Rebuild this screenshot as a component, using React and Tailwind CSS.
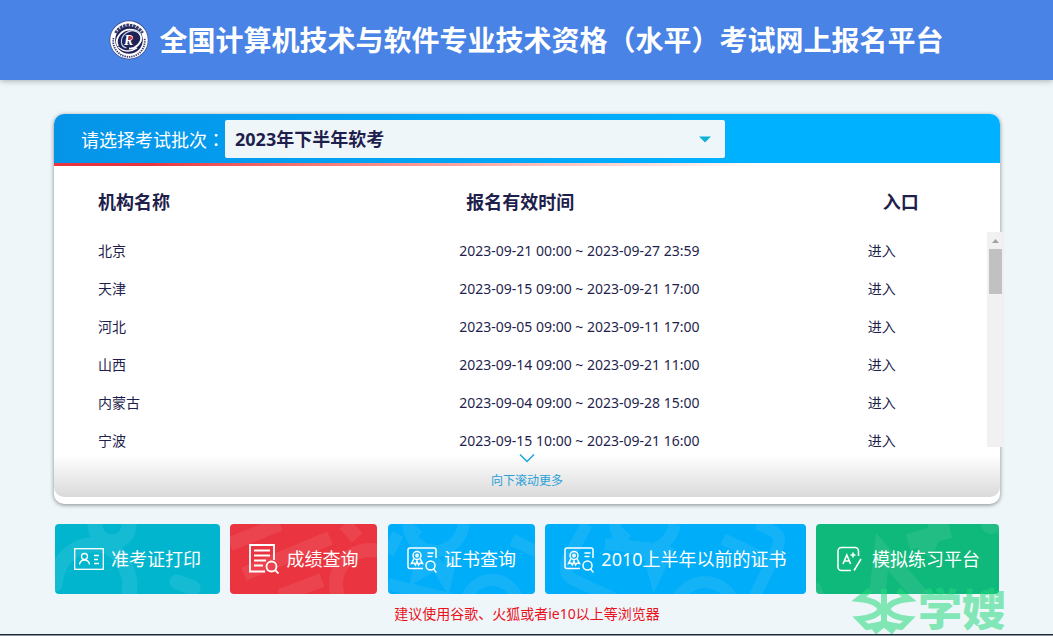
import React, { useState } from "react";

const batches = ["2023年下半年软考", "2023年上半年软考"];

const regions = [
  { name: "北京", time: "2023-09-21 00:00 ~ 2023-09-27 23:59" },
  { name: "天津", time: "2023-09-15 09:00 ~ 2023-09-21 17:00" },
  { name: "河北", time: "2023-09-05 09:00 ~ 2023-09-11 17:00" },
  { name: "山西", time: "2023-09-14 09:00 ~ 2023-09-21 11:00" },
  { name: "内蒙古", time: "2023-09-04 09:00 ~ 2023-09-28 15:00" },
  { name: "宁波", time: "2023-09-15 10:00 ~ 2023-09-21 16:00" },
];

function Logo() {
  return (
    <svg width="40" height="40" viewBox="0 0 40 40" aria-hidden="true">
      <circle cx="20" cy="20" r="19.5" fill="#3a4a86" />
      <circle cx="20" cy="20" r="18.8" fill="#fff" />
      <path d="M6.500 13a15.500 15.500 0 0 1 27 0" fill="none" stroke="#3b3f70" strokeWidth="3" strokeDasharray="2.6 0.8" />
      <path d="M4.500 18a15.800 15.800 0 1 0 31 0" fill="none" stroke="#3b3f70" strokeWidth="1.800" strokeDasharray="1.400 0.9" />
      <circle cx="20" cy="20" r="13.8" fill="#1e2257" />
      <path d="M9 26C5 18 13 8 24 10c8 1.500 11 9 5 15-2.500 2.500-6 4-9 3.500" fill="none" stroke="#fff" strokeWidth="1.800" />
      <path d="M31 13c-7-5-17-1-18.500 7-.6 4 1 7 5 8" fill="none" stroke="#c8cde8" strokeWidth="1.200" />
      <path d="M9 27c6 5 13 5 19 1" fill="none" stroke="#fff" strokeWidth="1.500" />
      <text x="15" y="25" fontSize="14" fontStyle="italic" fontWeight="700" fill="#fff" fontFamily="Liberation Serif, serif">R</text>
      <circle cx="21.500" cy="18" r="1.800" fill="#d8324c" />
    </svg>
  );
}

function CardIcon() {
  return (
    <svg width="30" height="30" viewBox="0 0 30 30" fill="none" stroke="#fff" strokeWidth="1.3">
      <rect x="0.700" y="4.700" width="28.600" height="20.600" />
      <circle cx="10.500" cy="12.500" r="3" />
      <path d="M5.500 20.500c.5-3 2-4.500 5-4.500s4.500 1.500 5 4.500M20 11.500h5M20 15.500h4M20 19.500h5" />
    </svg>
  );
}

function ScoreIcon() {
  return (
    <svg width="30" height="30" viewBox="0 0 30 30" fill="none" stroke="#fff" strokeWidth="1.8">
      <path d="M16 27.500H1V1h24v15M5 6.500h16M5 11.500h16M5 16.500h12M5 21.500h9" />
      <circle cx="22.500" cy="22.500" r="5" />
      <path d="M26 26l3.500 3.500" />
    </svg>
  );
}

function CertIcon() {
  return (
    <svg width="30" height="30" viewBox="0 0 30 30" fill="none" stroke="#fff" strokeWidth="1.5">
      <path d="M16 24.500H3a2 2 0 0 1-2-2V6a2 2 0 0 1 2-2h24a2 2 0 0 1 2 2v8" />
      <circle cx="10" cy="11.500" r="4" />
      <circle cx="10" cy="11.500" r="1.200" />
      <path d="M7 14.500l-2.500 5 2.500-.5 1.500 2 1.500-4 1.500 4 1.500-2 2.500.5-2.500-5M20.500 9h6M20.500 12.500h5" />
      <circle cx="23.500" cy="21.500" r="4.500" />
      <path d="M26.500 25l3 3.500" />
    </svg>
  );
}

function PracticeIcon() {
  return (
    <svg width="30" height="30" viewBox="0 0 30 30" fill="none" stroke="#fff" strokeWidth="1.6">
      <path d="M16 26.500H6.500a3.500 3.500 0 0 1-3.500-3.500V7a3.500 3.500 0 0 1 3.500-3.500H20a3.500 3.500 0 0 1 3.500 3.500v5" />
      <path d="M26 15l-7 11.500M8 20l3.800-9 3.800 9M9.500 17h5" />
      <path d="M18 8.500v5M15.500 11h5" />
    </svg>
  );
}

function PersonBg() {
  return (
    <g fill="none" strokeWidth="15" strokeLinecap="round">
      <circle cx="57" cy="1" r="17" />
      <path d="M0 60C4 15 55 10 68 38c8 14 8 24 5 38M122 58l16 6" />
    </g>
  );
}

function ScoreBg() {
  return (
    <g fill="none" strokeWidth="14">
      <path d="M0 20L50 0M14 50l86-36M50 72l42-16M115 0l12 14" />
      <circle cx="140" cy="60" r="34" />
    </g>
  );
}

function MedalBg() {
  return (
    <g fill="none" strokeWidth="12">
      <path d="M0 60l90 22M124 16l26 12M10 10L0 30" />
      <path d="M20 0c4 36 50 36 56 0" />
      <path d="M36 24l-6 26 18-10 10 16 6-28" />
      <path d="M22 8l5-5 5 5-5 5z" strokeWidth="3" />
      <circle cx="104" cy="82" r="26" />
    </g>
  );
}

function LongMedalBg() {
  return (
    <g fill="none" strokeWidth="12">
      <path d="M42 0L22 36c-4 12 0 18 12 22l50 24M178 15l42 20M212 0c24 8 26 14 18 30l-20 42" />
      <path d="M70 0c4 36 52 36 60 0" />
      <path d="M60 20l42 4 8 28 14-30" />
      <path d="M72 12l6-6 6 6-6 6z" strokeWidth="3" />
      <circle cx="160" cy="88" r="30" />
    </g>
  );
}

function GradeBg() {
  return (
    <g fill="none" strokeWidth="16">
      <path d="M60 80l6-52 46 52M92 18l42-12M122 0l-14 30" />
      <circle cx="175" cy="0" r="5" strokeWidth="10" />
      <path d="M0 60l6 12" strokeWidth="6" />
    </g>
  );
}

const links = [
  { label: "准考证打印", color: "bg-[#02b6cf]", Icon: CardIcon, Bg: PersonBg },
  { label: "成绩查询", color: "bg-[#ea353f]", Icon: ScoreIcon, Bg: ScoreBg },
  { label: "证书查询", color: "bg-[#00adf8]", Icon: CertIcon, Bg: MedalBg },
  { label: "2010上半年以前的证书", color: "bg-[#00adf8]", Icon: CertIcon, Bg: LongMedalBg },
  { label: "模拟练习平台", color: "bg-[#10b87b]", Icon: PracticeIcon, Bg: GradeBg },
];

function Watermark() {
  return (
    <div className="pointer-events-none absolute right-[47px] bottom-0 flex h-[50px] items-center text-[#22d87b]/55" aria-hidden="true">
      <svg width="68" height="50" viewBox="0 0 68 50" fill="none" stroke="currentColor" strokeWidth="6">
        <path d="M34 5v36M20 6L9 15c12 1 19 4 22 10-3 6-10 9-22 10l8 8c7-1 13-2 17-4 4 2 10 3 17 4l8-8c-12-1-19-4-22-10 3-6 10-9 22-10L48 6M24 48l10-8 10 8" />
      </svg>
      <span className="text-[44px] leading-[44px] font-black">学嫂</span>
    </div>
  );
}

export default function App() {
  const [batch, setBatch] = useState(batches[0]);

  return (
    <div className="flex min-h-screen flex-col bg-[#eff6f9] font-['Noto_Sans','Noto_Sans_CJK_SC',sans-serif] text-[#1f1f4d]">
      <header className="flex h-20 items-center justify-center gap-[10px] bg-[#4983e5] shadow-[0_1px_6px_rgba(0,0,0,0.3)]">
        <Logo />
        <h1 className="text-[28px] leading-10 font-bold whitespace-nowrap text-white">
          全国计算机技术与软件专业技术资格（水平）考试网上报名平台
        </h1>
      </header>

      <main className="relative flex flex-1 flex-col pt-[34px] pr-[53px] pl-[54px]">
        <section className="relative rounded-[10px] bg-white pb-[44px] shadow-[0_1px_4px_rgba(0,0,0,0.45)]">
          <div className="flex h-[49px] items-center rounded-t-[10px] bg-linear-to-r from-[#0594e8] to-[#00b1ff] to-70% pl-[27px]">
            <label htmlFor="batch" className="w-36 pt-[2px] text-lg whitespace-nowrap text-white">
              请选择考试批次<span className="font-['Noto_Sans_CJK_TC',sans-serif]">：</span>
            </label>
            <div className="relative h-[38px] w-[500px]">
              <select
                id="batch"
                value={batch}
                onChange={(e) => setBatch(e.target.value)}
                className="h-full w-full appearance-none rounded-[2px] bg-[#eff6f9] pl-[10px] text-lg font-bold"
              >
                {batches.map((b) => <option key={b}>{b}</option>)}
              </select>
              <svg className="pointer-events-none absolute top-4 right-[14px]" width="12" height="7" viewBox="0 0 12 7">
                <path d="M0 0.500h12L6 6.500z" fill="#0eb0d6" />
              </svg>
            </div>
          </div>
          <div className="h-[3px] bg-linear-to-r from-[#e8343f] from-10% to-white to-75%" />

          <div className="-mr-[3px] flex items-start">
            <table className="flex-1 table-fixed text-left">
              <thead>
                <tr className="h-[66px] text-lg">
                  <th className="w-[43%] pt-[6px] pl-11 font-bold">机构名称</th>
                  <th className="w-[44%] pt-[6px] pl-[11px] font-bold">报名有效时间</th>
                  <th className="pt-[6px] pl-[17px] font-bold">入口</th>
                </tr>
              </thead>
              <tbody className="text-sm">
                {regions.map((r) => (
                  <tr key={r.name} className="h-[38px]">
                    <td className="pl-11">{r.name}</td>
                    <td className="pl-1">{r.time}</td>
                    <td className="pl-[2px]"><a href="#enter">进入</a></td>
                  </tr>
                ))}
              </tbody>
            </table>
            {/* scrollbar */}
            <div className="mt-[66px] h-[215px] w-4 bg-[#f1f1f1]">
              <svg width="16" height="17" viewBox="0 0 16 17">
                <path d="M5 11h7l-3.500-4z" fill="#a3a3a3" />
              </svg>
              <div className="ml-[2px] h-[45px] w-[13px] bg-[#c1c1c1]" />
            </div>
          </div>

          <div className="absolute inset-x-0 bottom-[7px] flex h-[50px] flex-col items-center rounded-b-[10px] bg-linear-to-b from-transparent from-15% to-[#dadada] pt-[6px] text-xs text-[#2a9fd8]">
            <svg width="16" height="10" viewBox="0 0 16 10" fill="none" stroke="#1ba5dd" strokeWidth="1.500">
              <path d="M1 1.500l7 7 7-7" />
            </svg>
            <span className="mt-2 leading-5">向下滚动更多</span>
          </div>
        </section>

        <nav className="mt-5 flex justify-between px-px">
          {links.map(({ label, color, Icon, Bg }) => (
            <a
              key={label}
              href="#query"
              className={`relative flex h-[70px] items-center gap-[7px] overflow-hidden rounded-[4px] px-[19px] text-lg whitespace-nowrap text-white ${color}`}
            >
              <svg className="absolute inset-0 h-full w-full stroke-white opacity-8">
                <Bg />
              </svg>
              <Icon />
              <span className="relative">{label}</span>
            </a>
          ))}
        </nav>

        <p className="mt-[10px] text-center text-sm text-[#e8121d]">建议使用谷歌、火狐或者ie10以上等浏览器</p>
        <Watermark />
      </main>

      <footer className="h-[2px] border-t border-[#1d2733] bg-[#8e979f]" />
    </div>
  );
}
